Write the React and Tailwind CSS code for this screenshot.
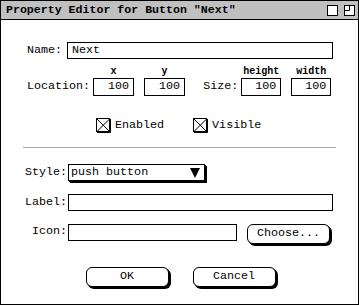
const mono = { fontFamily: '"Liberation Mono", "DejaVu Sans Mono", monospace' };

const Field = ({ width, value = "", align = "left", height = 17 }) => (
  <div
    className={`border border-black bg-white flex items-center text-[11.7px] leading-none ${
      align === "right" ? "justify-end pr-[4px]" : "pl-[4px]"
    }`}
    style={{ width, height }}
  >
    {value}
  </div>
);

const NumBox = ({ caption, value, width }) => (
  <div className="flex flex-col items-center">
    <span className="text-[10px] leading-[10px] font-bold mb-[1px]">{caption}</span>
    <Field width={width} height={18} value={value} align="right" />
  </div>
);

const Check = ({ label }) => (
  <div className="flex items-center">
    <svg width="15" height="15" viewBox="0 0 15 15" className="shrink-0">
      <rect x="0.5" y="0.5" width="13" height="13" fill="#fff" stroke="#000" />
      <path d="M1 14.5H14.5V1" fill="none" stroke="#000" />
      <path d="M1 1L13.5 13.5M13.5 1L1 13.5" stroke="#000" />
    </svg>
    <span className="ml-[4px] text-[11.7px] leading-none">{label}</span>
  </div>
);

const Button = ({ children }) => (
  <button className="w-[83px] h-[20px] rounded-[6px] border border-black bg-white shadow-[1px_1px_0_#000,2px_2px_0_#000] text-[11.7px] leading-none">
    {children}
  </button>
);

const App = () => {
  return (
    <div className="w-[359px] h-[306px] bg-white text-black" style={mono}>
      <div className="w-[359px] h-[305px] border border-black flex flex-col">
        {/* title bar */}
        <div className="h-[19px] bg-[#c0c0c0] border-b border-black flex items-center pl-[5px] pr-[3px]">
          <span className="text-[11.6px] font-bold leading-none">
            Property Editor for Button "Next"
          </span>
          <div className="ml-auto flex gap-[6px]">
            <svg width="11" height="11" viewBox="0 0 11 11">
              <rect x="0.5" y="0.5" width="10" height="10" fill="#fff" stroke="#000" />
            </svg>
            <svg width="11" height="11" viewBox="0 0 11 11">
              <rect x="0.5" y="0.5" width="10" height="10" fill="#fff" stroke="#000" />
              <path d="M5.5 0.5V5.5H0.5" fill="none" stroke="#000" />
            </svg>
          </div>
        </div>

        {/* name */}
        <div className="mt-[22px] flex items-center pl-[26px]">
          <span className="text-[11.7px] leading-none">Name:</span>
          <div className="ml-[5px]">
            <Field width={266} value="Next" />
          </div>
        </div>

        {/* location / size */}
        <div className="mt-[8px] flex items-end pl-[26px]">
          <span className="h-[18px] flex items-center text-[11.7px] leading-none">Location:</span>
          <div className="ml-[3px] flex gap-[10px]">
            <NumBox caption="x" value="100" width={41} />
            <NumBox caption="y" value="100" width={41} />
          </div>
          <span className="ml-[18px] h-[18px] flex items-center text-[11.7px] leading-none">Size:</span>
          <div className="ml-[3px] flex gap-[10px]">
            <NumBox caption="height" value="100" width={40} />
            <NumBox caption="width" value="100" width={40} />
          </div>
        </div>

        {/* checkboxes */}
        <div className="mt-[22px] flex pl-[95px]">
          <Check label="Enabled" />
          <div className="ml-[29px]">
            <Check label="Visible" />
          </div>
        </div>

        <div className="mt-[14px] mx-[22px] h-px bg-[#a8a8a8]" />

        {/* style */}
        <div className="mt-[16px] flex items-center">
          <span className="w-[66px] text-right text-[11.7px] leading-none">Style:</span>
          <div className="ml-[1px] w-[137px] h-[17px] border border-black bg-white shadow-[1px_1px_0_#000,2px_2px_0_#000] flex items-center pl-[2px] pr-[4px] text-[11.7px] leading-none">
            push button
            <svg width="10" height="10" viewBox="0 0 10 10" className="ml-auto">
              <path d="M0 0H10L5 10Z" fill="#000" />
            </svg>
          </div>
        </div>

        {/* label */}
        <div className="mt-[13px] flex items-center">
          <span className="w-[66px] text-right text-[11.7px] leading-none">Label:</span>
          <div className="ml-[1px]">
            <Field width={265} />
          </div>
        </div>

        {/* icon */}
        <div className="mt-[9px] flex items-center">
          <span className="w-[66px] text-right text-[11.7px] leading-none">Icon:</span>
          <div className="ml-[1px]">
            <Field width={169} />
          </div>
          <div className="ml-[10px]">
            <Button>Choose...</Button>
          </div>
        </div>

        {/* actions */}
        <div className="mt-[23px] flex justify-center gap-[24px] pl-[2px]">
          <Button>OK</Button>
          <Button>Cancel</Button>
        </div>
      </div>
    </div>
  );
};

export default App;
